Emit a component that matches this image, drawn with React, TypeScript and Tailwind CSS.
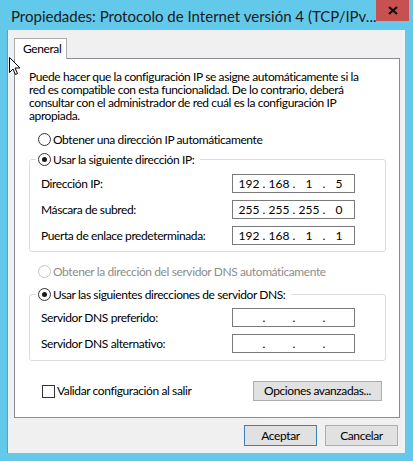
import React from 'react'

const Radio = ({ checked = false, disabled = false }: { checked?: boolean; disabled?: boolean }) => (
  <span
    className={`flex h-[13px] w-[13px] shrink-0 items-center justify-center rounded-full border bg-white ${
      disabled ? 'border-[#c4c4c4]' : 'border-[#333333]'
    }`}
  >
    {checked && <span className="h-[5px] w-[5px] rounded-full bg-[#1a1a1a]" />}
  </span>
)

const IpBox = ({ parts }: { parts?: string[] }) => {
  const fields = parts ?? ['', '', '', '']
  return (
    <div className="flex h-[19px] w-[123px] items-center border border-[#7a7a7a] bg-white pl-[4px] tracking-normal">
      {fields.map((f, i) => (
        <React.Fragment key={i}>
          <span className="w-[24px] text-center">{f}</span>
          {i < 3 && <span className="w-[6px] text-center">.</span>}
        </React.Fragment>
      ))}
    </div>
  )
}

const FieldRow = ({ label, parts }: { label: string; parts?: string[] }) => (
  <div className="flex items-center">
    <span className="ml-[5px] w-[191px]">{label}</span>
    <IpBox parts={parts} />
  </div>
)

export default function App() {
  return (
    <div className="relative flex h-[461px] w-[413px] flex-col overflow-hidden bg-[#63c9eb] font-['Lato','Liberation_Sans',sans-serif] text-[12px] tracking-[-0.4px] text-black">
      {/* Title bar */}
      <div className="flex h-[30px] shrink-0 items-start">
        <div className="ml-[11px] mt-[7px] flex-1 whitespace-nowrap text-[15px] leading-[18px] tracking-normal text-[#1b1b1b]">
          Propiedades: Protocolo de Internet versión 4 (TCP/IPv...
        </div>
        <div className="mr-[6px] flex h-[21px] w-[33px] shrink-0 items-center justify-center bg-[#c75050]">
          <svg width="10" height="9" viewBox="0 0 10 9">
            <path d="M1 1 L9 8 M9 1 L1 8" stroke="#111" strokeWidth="2.2" />
          </svg>
        </div>
      </div>

      {/* Client area */}
      <div className="ml-[7px] mr-[8px] flex h-[423px] flex-col border-l border-[#6f98a8] bg-[#f0f0f0] pl-[6px] pr-[5px] pt-[8px]">
        {/* Tab */}
        <div className="relative z-10 -mb-px flex h-[21px] w-[53px] items-center border border-b-0 border-[#acacac] bg-white pl-[8px]">
          General
        </div>

        {/* Tab panel */}
        <div className="flex h-[360px] flex-col border border-[#898c95] bg-white">
          <p className="ml-[14px] mt-[11px] whitespace-nowrap leading-[13px]">
            Puede hacer que la configuración IP se asigne automáticamente si la
            <br />
            red es compatible con esta funcionalidad. De lo contrario, deberá
            <br />
            consultar con el administrador de red cuál es la configuración IP
            <br />
            apropiada.
          </p>

          <div className="ml-[23px] mt-[10px] flex h-[15px] items-center gap-[2px]">
            <Radio />
            <span>Obtener una dirección IP automáticamente</span>
          </div>

          <fieldset className="ml-[14px] mt-[5px] w-[357px] rounded-[3px] border border-[#dcdcdc] pb-[6px] pl-[6px]">
            <legend className="flex h-[15px] items-center gap-[2px] pl-[2px] pr-[6px]">
              <Radio checked />
              <span>Usar la siguiente dirección IP:</span>
            </legend>
            <div className="flex flex-col gap-[7px] pt-[7px]">
              <FieldRow label="Dirección IP:" parts={['192', '168', '1', '5']} />
              <FieldRow label="Máscara de subred:" parts={['255', '255', '255', '0']} />
              <FieldRow label="Puerta de enlace predeterminada:" parts={['192', '168', '1', '1']} />
            </div>
          </fieldset>

          <div className="ml-[23px] mt-[12px] flex h-[15px] items-center gap-[2px] text-[#8d8d8d]">
            <Radio disabled />
            <span>Obtener la dirección del servidor DNS automáticamente</span>
          </div>

          <fieldset className="ml-[14px] mt-[8px] w-[357px] rounded-[3px] border border-[#dcdcdc] pb-[7px] pl-[6px]">
            <legend className="flex h-[15px] items-center gap-[2px] pl-[2px] pr-[6px]">
              <Radio checked />
              <span>Usar las siguientes direcciones de servidor DNS:</span>
            </legend>
            <div className="flex flex-col gap-[7px] pt-[6px]">
              <FieldRow label="Servidor DNS preferido:" />
              <FieldRow label="Servidor DNS alternativo:" />
            </div>
          </fieldset>

          <div className="mt-[20px] flex items-start">
            <div className="ml-[27px] mt-[1px] flex flex-1 items-center gap-[2px]">
              <span className="h-[13px] w-[13px] border border-[#333333] bg-white" />
              <span>Validar configuración al salir</span>
            </div>
            <button className="mr-[17px] h-[20px] w-[129px] border border-[#adadad] bg-[#e1e1e1]">
              Opciones avanzadas...
            </button>
          </div>
        </div>

        {/* Dialog buttons */}
        <div className="mt-[7px] flex justify-end gap-[8px] pr-[2px]">
          <button className="h-[21px] w-[73px] border border-[#3c7fb1] bg-[#e1e1e1]">Aceptar</button>
          <button className="h-[21px] w-[73px] border border-[#adadad] bg-[#e1e1e1]">Cancelar</button>
        </div>
      </div>

      {/* Mouse cursor */}
      <svg className="absolute left-[9px] top-[57px]" width="12" height="19" viewBox="0 0 12 19">
        <path d="M0.5 0.5 L0.5 15.5 L4 12 L6.5 17.5 L8.5 16.5 L6 11 L11 11 Z" fill="#fff" stroke="#000" strokeWidth="1" />
      </svg>
    </div>
  )
}
